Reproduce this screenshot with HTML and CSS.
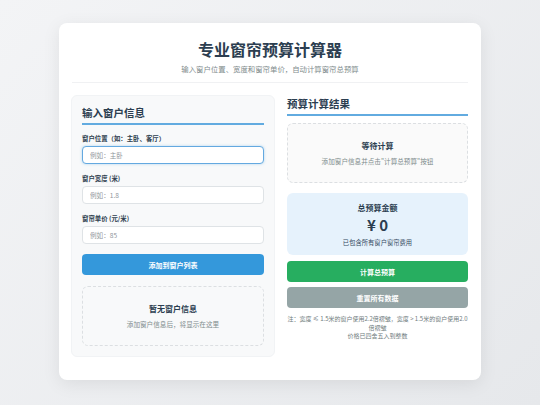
FILE: index.html
```html
<!DOCTYPE html>
<html lang="zh-CN">

<head>
    <meta charset="UTF-8">
    <meta name="viewport" content="width=device-width, initial-scale=1.0">
    <title>专业窗帘预算计算器</title>
    <link rel="stylesheet" href="styles.css">
</head>

<body>
    <div class="container">
        <div class="header">
            <h1>专业窗帘预算计算器</h1>
            <p class="subtitle">输入窗户位置、宽度和窗帘单价，自动计算窗帘总预算</p>
        </div>

        <div class="main">
            <div class="input-panel">
                <h2>输入窗户信息</h2>
                <div class="form-group">
                    <label for="location">窗户位置（如：主卧、客厅）</label>
                    <input type="text" id="location" class="focused" placeholder="例如：主卧">
                </div>
                <div class="form-group">
                    <label for="width">窗户宽度 (米)</label>
                    <input type="text" id="width" placeholder="例如：1.8">
                </div>
                <div class="form-group">
                    <label for="price">窗帘单价 (元/米)</label>
                    <input type="text" id="price" placeholder="例如：85">
                </div>
                <button class="btn btn-blue" onclick="addWindow()">添加到窗户列表</button>
                <div class="empty-box" id="windowList">
                    <strong>暂无窗户信息</strong>
                    <span>添加窗户信息后，将显示在这里</span>
                </div>
            </div>

            <div class="result-panel">
                <h2>预算计算结果</h2>
                <div class="empty-box wait-box" id="resultBox">
                    <strong>等待计算</strong>
                    <span>添加窗户信息并点击"计算总预算"按钮</span>
                </div>
                <div class="total-box">
                    <div class="total-title">总预算金额</div>
                    <div class="total-amount" id="totalAmount">¥ 0</div>
                    <div class="total-note">已包含所有窗户窗帘费用</div>
                </div>
                <button class="btn btn-green" onclick="calculate()">计算总预算</button>
                <button class="btn btn-gray" onclick="resetAll()">重置所有数据</button>
                <p class="note">注：宽度 ≤ 1.5米的窗户使用2.2倍褶皱，宽度 &gt; 1.5米的窗户使用2.0倍褶皱<br>价格已四舍五入到整数</p>
            </div>
        </div>
    </div>
    <script>
        let windows = [];

        function addWindow() {
            const location = document.getElementById('location').value.trim();
            const width = parseFloat(document.getElementById('width').value);
            const price = parseFloat(document.getElementById('price').value);
            if (!location || !width || !price) {
                return;
            }
            windows.push({ location, width, price });
            const list = document.getElementById('windowList');
            list.innerHTML = windows.map(w => `<span>${w.location}：${w.width}米 × ${w.price}元/米</span>`).join('');
        }

        function calculate() {
            let total = 0;
            windows.forEach(w => {
                const fold = w.width <= 1.5 ? 2.2 : 2.0;
                total += w.width * fold * w.price;
            });
            document.getElementById('totalAmount').innerText = '¥ ' + Math.round(total);
        }

        function resetAll() {
            windows = [];
            document.getElementById('totalAmount').innerText = '¥ 0';
            document.getElementById('windowList').innerHTML = '<strong>暂无窗户信息</strong><span>添加窗户信息后，将显示在这里</span>';
        }
    </script>
</body>

</html>
```

FILE: styles.css
```css
body {
    font-family: "Noto Sans CJK SC", "Noto Sans", sans-serif;
    background: linear-gradient(135deg, #f3f4f6 0%, #e6e8eb 100%);
    margin: 0;
    padding: 23px 59px;
    min-height: 405px;
    box-sizing: border-box;
    color: #2c3e50;
}

.container {
    background: #fff;
    border-radius: 8px;
    padding: 13px 13px 24px;
    box-shadow: 0 4px 18px rgba(0, 0, 0, 0.08);
}

.header {
    text-align: center;
    padding-bottom: 8px;
    border-bottom: 1px solid #f0f1f3;
    margin-bottom: 13px;
}

h1 {
    font-size: 16px;
    line-height: 26px;
    margin: 0;
    color: #2c3e50;
}

.subtitle {
    font-size: 7.4px;
    line-height: 10px;
    margin: 2px 0 0;
    color: #7f8c8d;
}

.main {
    display: grid;
    grid-template-columns: 202px 181px;
    column-gap: 13px;
    align-items: start;
}

h2 {
    font-size: 10.5px;
    line-height: 14px;
    margin: 0;
    padding-bottom: 3px;
    border-bottom: 2px solid #62abe0;
    color: #2c3e50;
}

.input-panel {
    background: #f8f9fa;
    border-radius: 6px;
    padding: 10px;
    border: 1px solid #f1f3f5;
    margin: -1px;
}

.input-panel h2 {
    margin-bottom: 9px;
}

.input-panel .empty-box {
    margin-top: 11px;
}

.result-panel {
    padding-top: 1px;
}

.form-group {
    margin-bottom: 10px;
}

.form-group label {
    display: block;
    font-size: 6.4px;
    line-height: 9px;
    font-weight: 700;
    color: #2f3f4f;
    margin-bottom: 3px;
}

.form-group input {
    display: block;
    width: 100%;
    height: 18px;
    box-sizing: border-box;
    border: 1px solid #dfe3e6;
    border-radius: 4px;
    background: #fff;
    padding: 0 7px;
    font-family: inherit;
    font-size: 6.6px;
    color: #333;
}

.form-group input::placeholder {
    color: #90969b;
}

.form-group input.focused,
.form-group input:focus {
    border-color: #64a9e0;
    outline: none;
    box-shadow: 0 0 3px rgba(52, 152, 219, 0.35);
}

.btn {
    display: block;
    width: 100%;
    height: 21px;
    border: none;
    border-radius: 4px;
    color: #fff;
    font-family: inherit;
    font-size: 7px;
    font-weight: 600;
    cursor: pointer;
}

.btn-blue {
    background-color: #3498db;
}

.btn-green {
    background-color: #27ae60;
    margin-top: 6px;
}

.btn-gray {
    background-color: #95a5a6;
    margin-top: 5px;
}

.empty-box {
    height: 60px;
    box-sizing: border-box;
    border: 1px dashed #dcdfe2;
    border-radius: 6px;
    display: flex;
    flex-direction: column;
    align-items: center;
    justify-content: center;
    gap: 5px;
    margin-top: 12px;
}

.empty-box strong {
    font-size: 8px;
    line-height: 10px;
    color: #2c3e50;
}

.empty-box span {
    font-size: 6.6px;
    line-height: 10px;
    color: #7f8c8d;
}

.wait-box {
    background: #fafafa;
    margin-top: 7px;
}

.total-box {
    margin-top: 10px;
    background: #e6f2fc;
    border-radius: 6px;
    padding: 10px 0 7px;
    text-align: center;
}

.total-title {
    font-size: 8px;
    line-height: 10px;
    font-weight: 700;
    color: #2c3e50;
}

.total-amount {
    font-size: 15px;
    line-height: 20px;
    font-weight: 700;
    margin-top: 2px;
    color: #2c3e50;
}

.total-note {
    font-size: 6.3px;
    line-height: 10px;
    margin-top: 3px;
    color: #34495e;
}

.note {
    font-size: 6px;
    line-height: 8.5px;
    text-align: center;
    color: #6f7b7d;
    margin: 7px 0 0;
}
```
